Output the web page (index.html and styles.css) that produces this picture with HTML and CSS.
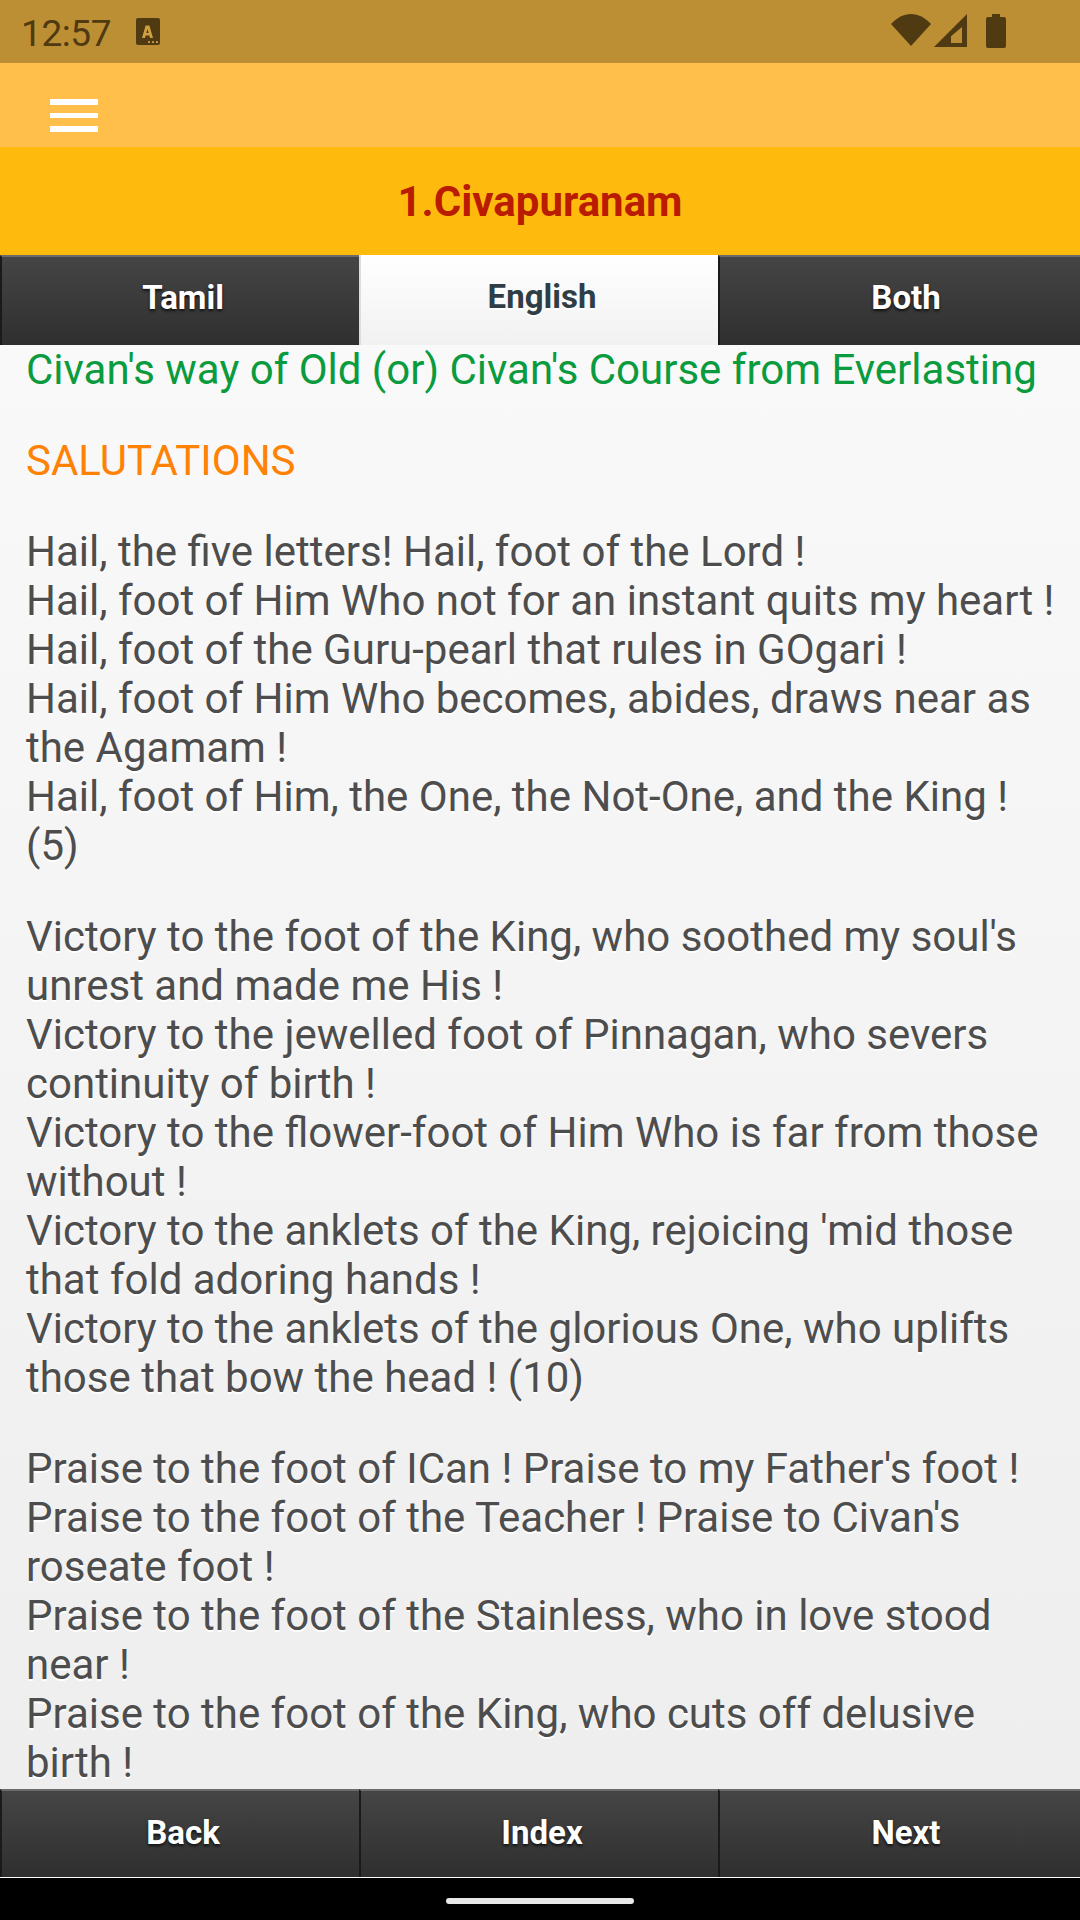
FILE: index.html
```html
<!DOCTYPE html>
<html lang="en">
<head>
<meta charset="utf-8">
<title>1.Civapuranam</title>
<link rel="stylesheet" href="styles.css">
</head>
<body>
<div class="app">
  <header class="status">
    <div class="status-left">
      <span class="time">12:57</span>
      <svg class="a-icon" viewBox="0 0 24 27" width="24" height="27"><rect width="24" height="27" rx="2" fill="#4f3a12"/><path d="M9.600 7.500h3.800l3.600 12.500h-3l-.6-2.600h-3.800L9 20H6l3.600-12.500zm1.900 3.500-1.200 4h2.400l-1.200-4z" fill="#cf9f42"/><path d="M12 23.300h2v1.700h-2zM16 23.300h2v1.700h-2zM20 23.300h2v1.700h-2z" fill="#cf9f42"/></svg>
    </div>
    <div class="status-right">
      <svg class="wifi" viewBox="0 0 40 32" width="40" height="32"><path d="M0 10C6 3.500 13 0 20 0s14 3.500 20 10L20 32 0 10z" fill="#4f3a12"/></svg>
      <svg class="signal" viewBox="0 0 33 33" width="33" height="33"><path d="M33 0v33H0L33 0z" fill="#4f3a12"/><path d="M28 13v16H17v-6.700z" fill="#bd8f34"/></svg>
      <svg class="battery" viewBox="0 0 20 34" width="20" height="34"><path d="M6 0h8v3h4a2 2 0 0 1 2 2v27a2 2 0 0 1-2 2H2a2 2 0 0 1-2-2V5a2 2 0 0 1 2-2h4z" fill="#4f3a12"/></svg>
    </div>
  </header>
  <div class="toolbar">
    <div class="burger"><span></span><span></span><span></span></div>
  </div>
  <h1 class="title">1.Civapuranam</h1>
  <nav class="bar tabs">
    <a class="btn">Tamil</a>
    <a class="btn active">English</a>
    <a class="btn">Both</a>
  </nav>
  <main class="content">
    <p class="green">Civan's way of Old (or) Civan's Course from Everlasting</p>
    <p class="orange">SALUTATIONS</p>
    <p>Hail, the five letters! Hail, foot of the Lord !<br>
    Hail, foot of Him Who not for an instant quits my heart !<br>
    Hail, foot of the Guru-pearl that rules in GOgari !<br>
    Hail, foot of Him Who becomes, abides, draws near as the Agamam !<br>
    Hail, foot of Him, the One, the Not-One, and the King ! (5)</p>
    <p>Victory to the foot of the King, who soothed my soul's unrest and made me His !<br>
    Victory to the jewelled foot of Pinnagan, who severs continuity of birth !<br>
    Victory to the flower-foot of Him Who is far from those without !<br>
    Victory to the anklets of the King, rejoicing 'mid those that fold adoring hands !<br>
    Victory to the anklets of the glorious One, who uplifts those that bow the head ! (10)</p>
    <p>Praise to the foot of ICan ! Praise to my Father's foot !<br>
    Praise to the foot of the Teacher ! Praise to Civan's roseate foot !<br>
    Praise to the foot of the Stainless, who in love stood near !<br>
    Praise to the foot of the King, who cuts off delusive birth !</p>
  </main>
  <nav class="bar footer">
    <a class="btn">Back</a>
    <a class="btn">Index</a>
    <a class="btn">Next</a>
  </nav>
  <div class="navbar"><span class="pill"></span></div>
</div>
</body>
</html>
```
FILE: styles.css
```css
* { box-sizing: border-box; }
html, body { margin: 0; padding: 0; }
body { font-family: Roboto, "Noto Sans", sans-serif; background: #000; }
.app { width: 1080px; height: 1920px; display: flex; flex-direction: column; overflow: hidden; }
.status { flex: none; height: 63px; background: #bd8f34; display: flex; justify-content: space-between; align-items: flex-start; padding: 14px 74px 0 21px; color: #4f3a12; }
.status-left { display: flex; align-items: flex-start; gap: 25px; }
.time { font-size: 37px; line-height: 40px; letter-spacing: -0.4px; }
.a-icon { margin-top: 4px; }
.status-right { display: flex; align-items: flex-start; }
.status-right .signal { margin-left: 3px; }
.status-right .battery { margin-left: 19px; }
.toolbar { flex: none; height: 84px; background: #ffbf4a; padding: 36px 0 0 50px; }
.burger { width: 48px; display: flex; flex-direction: column; gap: 8px; }
.burger span { height: 5.500px; background: #fff; }
.title { flex: none; height: 108px; margin: 0; background: #ffbb0d; color: #b91c00; font-size: 42px; font-weight: 700; line-height: 109px; text-align: center; }
.bar { display: flex; flex: none; height: 88px; overflow: hidden; }
.tabs { height: 90px; }
.btn { flex: none; width: 359px; display: flex; align-items: center; justify-content: center; padding: 0 0 4px 5px; font-size: 33px; font-weight: 700; color: #fff; text-shadow: 0 2px 3px #111; background: linear-gradient(#454545, #2f2f2f); border-top: 2px solid #6b6b6b; border-left: 2px solid #1a1a1a; }
.btn:last-child { width: 362px; padding-left: 12px; }
.btn.active { color: #2f3e46; text-shadow: 0 2px 0 #fff; background: linear-gradient(#fff, #f1f1f1); border-top: 0; border-left: 2px solid #ddd; }
.tabs .btn { padding-bottom: 8px; }
.content { flex: 1; min-height: 0; overflow: hidden; background: linear-gradient(#f9f9f9, #eee); padding: 0 20px 0 26px; display: flex; flex-direction: column; gap: 42px; color: #4d4d4d; font-size: 42px; font-weight: 380; line-height: 49px; text-shadow: 0 2px 0 #fff; }
.content p { margin: 0; flex: none; }
.content .green { color: #0a9b3e; text-shadow: none; }
.content .orange { color: #ff8205; text-shadow: none; }
.footer { border-bottom: 1px solid #fff; height: 89px; }
.navbar { flex: none; height: 42px; background: #000; display: flex; justify-content: center; padding-top: 20px; }
.pill { width: 188px; height: 6px; border-radius: 3px; background: #e8e8e8; }
```
